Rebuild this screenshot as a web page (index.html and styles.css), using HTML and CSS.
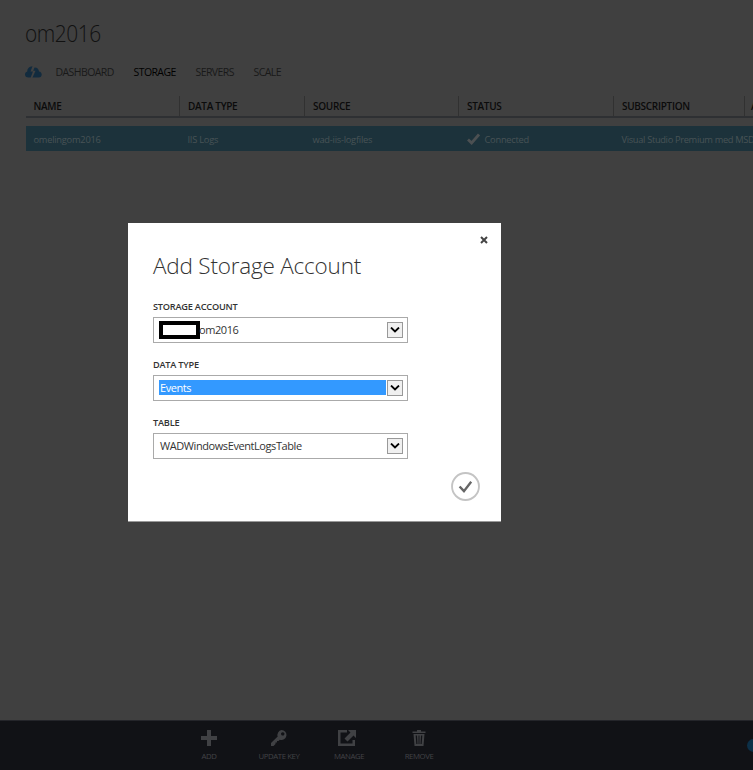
FILE: index.html
```html
<!DOCTYPE html>
<html lang="en">
<head>
<meta charset="utf-8">
<title>om2016</title>
<link rel="stylesheet" href="styles.css">
</head>
<body>
<div class="app">
  <main class="page">
    <h1 class="title">om2016</h1>
    <nav class="tabs">
      <svg class="cloud" viewBox="0 0 17 12"><path d="M3.500 11.500C1.300 11.500 0 10.300 0 8.500C0 7 .9 5.800 2.300 5.500C2.200 2.700 4 .4 7.500 .2L5.500 5.500H8L5.700 11.500ZM7.500 11.500L10.500 4.800H8.200L9.500 1.400C12.500 1.300 14 3.500 14 5.600C15.700 5.800 16.700 7 16.700 8.600C16.700 10.400 15.600 11.500 13.700 11.500Z"/></svg>
      <a class="tab t1">DASHBOARD</a><a class="tab t2 active">STORAGE</a><a class="tab t3">SERVERS</a><a class="tab t4">SCALE</a>
    </nav>
    <div class="grid head">
      <div>NAME</div><div>DATA TYPE</div><div>SOURCE</div><div>STATUS</div><div>SUBSCRIPTION</div><div class="last">A</div>
    </div>
    <div class="grid row">
      <div>omelingom2016</div><div>IIS Logs</div><div>wad-iis-logfiles</div>
      <div><svg class="ok" viewBox="0 0 13 12"><path d="M1 6.500L4.600 10L12 1.500"/></svg>Connected</div>
      <div class="sub">Visual Studio Premium med MSD</div><div></div>
    </div>
  </main>
  <footer class="bar">
    <div class="cmd"><svg viewBox="0 0 18 18"><path d="M7 1h4v6h6v4h-6v6H7v-6H1V7h6z"/></svg>ADD</div>
    <div class="cmd"><svg viewBox="0 0 18 18"><path fill-rule="evenodd" d="M11.500 1a5 5 0 1 1-1.700 9.700L8.500 12H7v1.500H5.500V15L3.500 17H1v-3l6.700-6.500A5 5 0 0 1 11.500 1zM12.700 3.200a1.700 1.700 0 1 0 .1 0z"/></svg>UPDATE KEY</div>
    <div class="cmd"><svg class="manage" viewBox="0 0 18 18"><path d="M0 1h9v2.500H2.500v11h12V11H17v6H0zM10 1h8v8l-2.500-2.500-6 6-3-3 6-6z"/></svg>MANAGE</div>
    <div class="cmd"><svg viewBox="0 0 18 18"><path fill-rule="evenodd" d="M7 1h4v1.500h4.500V4h-13V2.500H7zM3.500 5h11L13.500 17h-9zM5.700 6.500L6.300 15H7.500L7 6.500zM8.500 6.500V15h1V6.500zM11 6.500L10.500 15h1.200l.6-8.500z"/></svg>REMOVE</div>
    <i class="dot"></i>
  </footer>
  <section class="dialog">
    <svg class="close" viewBox="0 0 8 8"><path d="M1 1l6 6M7 1L1 7"/></svg>
    <h2 class="heading">Add Storage Account</h2>
    <label class="label">STORAGE ACCOUNT</label>
    <div class="select"><i class="redact"></i><span class="value v1">om2016</span><b class="arrow"><svg viewBox="0 0 10 6"><path d="M1 .5l4 4 4-4"/></svg></b></div>
    <label class="label">DATA TYPE</label>
    <div class="select"><span class="value selected">Events</span><b class="arrow"><svg viewBox="0 0 10 6"><path d="M1 .5l4 4 4-4"/></svg></b></div>
    <label class="label">TABLE</label>
    <div class="select"><span class="value">WADWindowsEventLogsTable</span><b class="arrow"><svg viewBox="0 0 10 6"><path d="M1 .5l4 4 4-4"/></svg></b></div>
    <svg class="submit" viewBox="0 0 28 28"><circle cx="14" cy="14" r="13"/><path d="M8.300 14l4.200 4.500 7-9"/></svg>
  </section>
</div>
</body>
</html>
```
FILE: styles.css
```css
* { box-sizing: border-box; }
body { margin: 0; font-family: "Open Sans", "Noto Sans", sans-serif; }
.app { position: relative; width: 753px; height: 770px; overflow: hidden; background: #404040; display: flex; flex-direction: column; }
.page { flex: 1; padding: 16px 0 0 25px; min-height: 0; }
.title { margin: 0; height: 34px; line-height: 34px; font-size: 23.5px; font-weight: 300; color: #111; letter-spacing: -.5px; transform: scaleX(.89); transform-origin: left; }
.tabs { display: flex; align-items: center; height: 20px; margin-top: 12px; font-size: 10.5px; color: #191919; }
.cloud { width: 17px; height: 12px; fill: #122b3e; margin-right: 13.5px; }
.tab { white-space: nowrap; letter-spacing: -.58px; }
.t1 { width: 78px; }
.t2 { width: 62px; }
.t3 { width: 58px; }
.active { color: #000; }
.grid { display: grid; grid-template-columns: 154px 125px 154px 155px 131px 60px; margin-left: 1px; white-space: nowrap; }
.head { height: 22px; margin-top: 14px; border-bottom: 2px solid #2e3033; font-size: 10px; font-weight: 600; color: #0b0b0b; }
.head > div { padding-left: 7.5px; line-height: 21px; height: 20px; letter-spacing: -.3px; }
.head > div + div { border-left: 1px solid #313131; margin-left: -1px; padding-left: 8px; }
.head > div.last { padding-left: 6px; }
.row { height: 25px; margin-top: 8px; background: #1c323b; font-size: 9.3px; letter-spacing: -.25px; color: #485256; }
.row > div { padding-left: 7.5px; display: flex; align-items: center; padding-top: 1px; }
.row > .sub { letter-spacing: -.33px; }
.ok { width: 13px; height: 12px; margin-right: 5px; fill: none; stroke: #4c5052; stroke-width: 2.8; }
.bar { position: relative; height: 50px; background: #111216; border-top: 1px solid #24252a; display: flex; padding-left: 174px; }
.cmd { width: 70px; display: flex; flex-direction: column; align-items: center; padding-top: 8px; color: #424346; font-size: 7.8px; letter-spacing: -.42px; line-height: 9px; white-space: nowrap; }
.cmd svg { width: 18px; height: 18px; fill: #404144; margin-bottom: 5px; }
.cmd .manage { width: 18px; margin-left: -4px; }
.dot { position: absolute; left: 747px; top: 18px; width: 13px; height: 13px; border-radius: 50%; background: #0c3048; }
.dialog { position: absolute; left: 128px; top: 223px; width: 373px; height: 299px; background: #fff; border-bottom: 1px solid #999; padding: 26px 93px 0 25px; display: flex; flex-direction: column; }
.close { position: absolute; right: 13px; top: 13px; width: 8px; height: 8px; fill: none; stroke: #444; stroke-width: 2; }
.heading { margin: 0 0 16px; height: 34px; line-height: 34px; font-size: 22.5px; font-weight: 300; color: #333; white-space: nowrap; letter-spacing: -.2px; }
.label { height: 18px; line-height: 16px; font-size: 9.2px; font-weight: 600; letter-spacing: -.22px; color: #333; white-space: nowrap; }
.select { height: 26px; margin-bottom: 14px; border: 1px solid #aaa; padding: 4px 4px 4px 5px; width: 255px; display: flex; align-items: center; font-size: 11px; color: #333; }
.value { flex: 1; height: 15px; line-height: 16px; padding-left: 1px; margin-right: 1px; margin-top: -1px; white-space: nowrap; letter-spacing: -.42px; }
.selected { background: #39f; color: #fff; }
.redact { width: 41px; height: 18px; border: 4px solid #000; }
.v1 { padding-left: 0; margin-left: -1px; }
.arrow { width: 16px; height: 16px; border: 1px solid #999; background: #f0f0f0; display: flex; align-items: center; justify-content: center; margin-top: -1px; }
.arrow svg { width: 10px; height: 6px; fill: none; stroke: #000; stroke-width: 1.8; }
.submit { position: absolute; right: 21px; bottom: 20px; width: 29px; height: 29px; fill: none; stroke: #c4c4c4; stroke-width: 1.8; }
.submit path { stroke: #666; stroke-width: 2.3; }
```
